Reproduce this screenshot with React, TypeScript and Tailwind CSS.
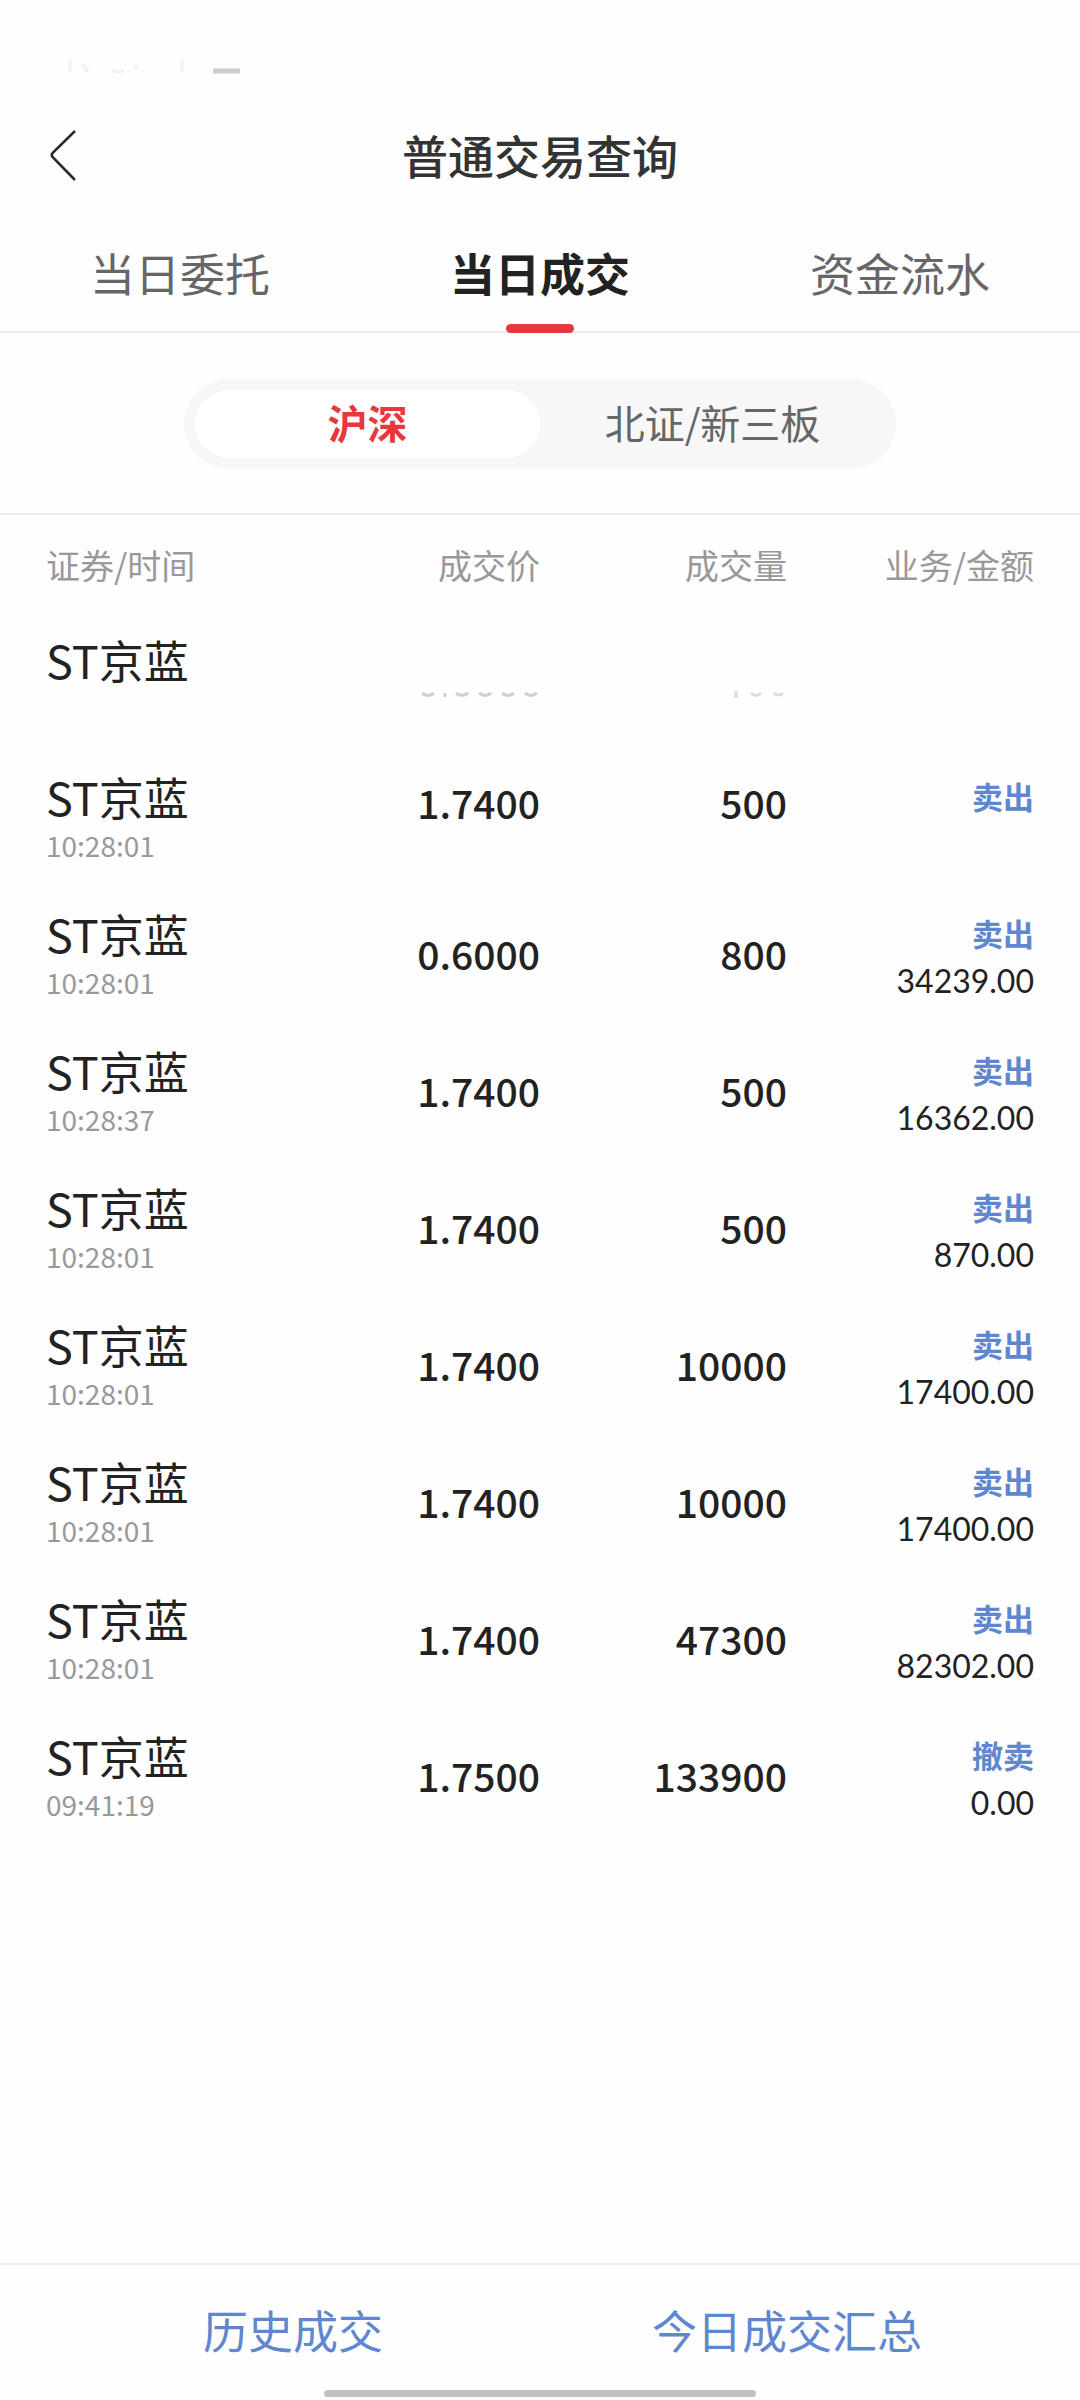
type Trade = {
  name: string;
  time: string;
  price: string;
  volume: string;
  side: string;
  amount: string;
  raised?: boolean;
};

const trades: Trade[] = [
  { name: 'ST京蓝', time: '', price: '', volume: '', side: '', amount: '' },
  { name: 'ST京蓝', time: '10:28:01', price: '1.7400', volume: '500', side: '卖出', amount: '', raised: true },
  { name: 'ST京蓝', time: '10:28:01', price: '0.6000', volume: '800', side: '卖出', amount: '34239.00' },
  { name: 'ST京蓝', time: '10:28:37', price: '1.7400', volume: '500', side: '卖出', amount: '16362.00' },
  { name: 'ST京蓝', time: '10:28:01', price: '1.7400', volume: '500', side: '卖出', amount: '870.00' },
  { name: 'ST京蓝', time: '10:28:01', price: '1.7400', volume: '10000', side: '卖出', amount: '17400.00' },
  { name: 'ST京蓝', time: '10:28:01', price: '1.7400', volume: '10000', side: '卖出', amount: '17400.00' },
  { name: 'ST京蓝', time: '10:28:01', price: '1.7400', volume: '47300', side: '卖出', amount: '82302.00' },
  { name: 'ST京蓝', time: '09:41:19', price: '1.7500', volume: '133900', side: '撤卖', amount: '0.00' },
];

function StatusBar() {
  return (
    <div className="h-[100px] pt-[56px] pl-[64px]">
      <svg width="180" height="22" viewBox="0 0 180 22" fill="none" aria-hidden="true">
        <g stroke="#f1f1f1" strokeWidth="3">
          <path d="M6 4v12M18 8l6 8M48 14q6 4 12 0M72 8v6M118 4v12" />
        </g>
        <path d="M149 15h27" stroke="#cccccc" strokeWidth="5" />
      </svg>
    </div>
  );
}

function FadedPrice() {
  return (
    <svg
      className="mt-[36px] ml-auto"
      width="122"
      height="8"
      viewBox="0 0 122 8"
      fill="none"
      stroke="#d0d0d0"
      strokeWidth="3"
      aria-hidden="true"
    >
      <path d="M4 2q6 5 12 0M27 2v4M38 2q6 5 12 0M61 2q6 5 12 0M84 2q6 5 12 0M107 2q6 5 12 0" />
    </svg>
  );
}

function FadedVolume() {
  return (
    <svg
      className="mt-[36px] ml-auto"
      width="60"
      height="8"
      viewBox="0 0 60 8"
      fill="none"
      stroke="#dcdcdc"
      strokeWidth="3"
      aria-hidden="true"
    >
      <path d="M9 0v7M24 2q5 5 10 0M47 2q5 4 9 0" />
    </svg>
  );
}

function TradeRow({ trade }: { trade: Trade }) {
  const numberCell = trade.raised
    ? 'p-0 pt-[26px] align-top text-right text-[39px] leading-[48px] font-medium'
    : 'p-0 pt-[40px] align-top text-right text-[39px] leading-[48px] font-medium';
  return (
    <tr className="h-[137px]">
      <th scope="row" className="p-0 pt-[17px] align-top text-left font-normal">
        <div className="text-[45px] leading-[56px] whitespace-nowrap">{trade.name}</div>
        <div className="text-[28px] leading-[40px] text-[#999999]">{trade.time}</div>
      </th>
      <td className={numberCell}>{trade.price || <FadedPrice />}</td>
      <td className={numberCell}>{trade.volume || <FadedVolume />}</td>
      <td className="p-0 pt-[22px] align-top text-right">
        <div className="text-[31px] leading-[44px] font-bold text-[#5f87cf]">{trade.side}</div>
        <div className="font-['Lato','Noto_Sans_CJK_SC',sans-serif] text-[32px] leading-[52px]">
          {trade.amount}
        </div>
      </td>
    </tr>
  );
}

export default function App() {
  return (
    <div className="flex min-h-screen flex-col bg-[#fefefe] font-['Noto_Sans_CJK_SC',sans-serif] text-[#222222]">
      <StatusBar />

      <header className="grid h-[110px] grid-cols-[1fr_auto_1fr] items-center">
        <button type="button" aria-label="返回" className="ml-[48px] w-[32px]">
          <svg width="32" height="54" viewBox="0 0 32 54" fill="none" stroke="#2b2b2b" strokeWidth="2.6">
            <path d="M27 3L4.5 25Q3 27 4.5 29L27 52" />
          </svg>
        </button>
        <h1 className="pb-[2px] text-[46px] leading-[56px] font-medium text-[#333333]">普通交易查询</h1>
      </header>

      <nav className="grid h-[123px] grid-cols-3 border-b-2 border-[#eeeeee] text-[45px] leading-[56px]">
        <button type="button" className="pt-[4px] text-[#666666]">当日委托</button>
        <button type="button" aria-current="page" className="relative pt-[4px] font-bold">
          当日成交
          <span className="absolute -bottom-[2px] left-1/2 h-[9px] w-[68px] -translate-x-1/2 rounded-full bg-[#e8383d]" />
        </button>
        <button type="button" className="pt-[4px] text-[#666666]">资金流水</button>
      </nav>

      <div className="border-b-2 border-[#eeeeee] px-[184px] pt-[46px] pb-[44px]">
        <div className="grid h-[90px] grid-cols-2 rounded-full bg-[#f7f7f7] p-[11px] text-[40px] leading-[56px]">
          <button type="button" aria-pressed="true" className="rounded-full bg-white pb-[4px] font-bold text-[#e8383d]">
            沪深
          </button>
          <button type="button" aria-pressed="false" className="pb-[4px] text-[#666666]">北证/新三板</button>
        </div>
      </div>

      <main className="px-[46px]">
        <table className="w-full table-fixed border-collapse">
          <thead>
            <tr className="h-[100px] text-[34px] leading-[48px] text-[#999999]">
              <th scope="col" className="p-0 text-left font-normal">证券/时间</th>
              <th scope="col" className="p-0 text-right font-normal">成交价</th>
              <th scope="col" className="p-0 text-right font-normal">成交量</th>
              <th scope="col" className="p-0 text-right font-normal">业务/金额</th>
            </tr>
          </thead>
          <tbody>
            {trades.map((trade, i) => (
              <TradeRow key={i} trade={trade} />
            ))}
          </tbody>
        </table>
      </main>

      <footer className="mt-auto border-t-2 border-[#eeeeee]">
        <div className="grid h-[125px] grid-cols-2 px-[46px] text-[45px] leading-[56px] text-[#5f87cf]">
          <button type="button" className="pt-[5px]">历史成交</button>
          <button type="button" className="pt-[5px]">今日成交汇总</button>
        </div>
        <div className="mx-auto mb-[3px] h-[7px] w-2/5 rounded-full bg-[#c1c1c1]" />
      </footer>
    </div>
  );
}
